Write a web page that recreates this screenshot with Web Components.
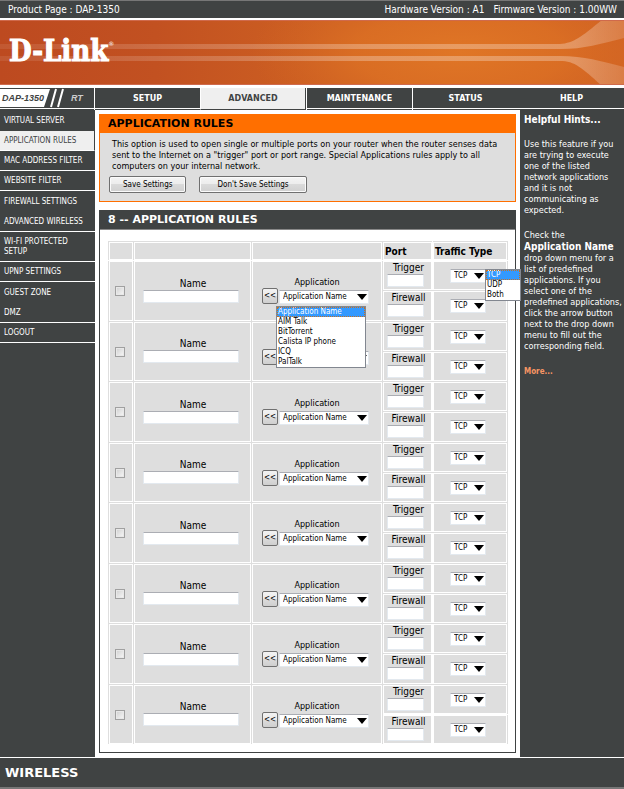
<!DOCTYPE html>
<html lang="en">
<head>
<meta charset="utf-8">
<title>D-Link DAP-1350 : Application Rules</title>
<style>
  body {
    margin: 0;
    background: #fff;
    color: #000;
    font: 9px/11px "DejaVu Sans Condensed", "DejaVu Sans", sans-serif;
    --dark: #404343;
    --orange: #ff6f00;
    --cell: #dedede;
    --wide: "DejaVu Sans", sans-serif;
  }
  .columns {
    display: grid;
    grid-template-columns: 95px minmax(0, 1fr) 104px;
    border-top: 1px solid var(--dark);
  }
  main {
    display: flex;
    flex-direction: column;
    gap: 8px;
    padding: 4px;
  }
</style>
</head>
<body>
<top-bar data-product="DAP-1350" data-hardware="A1" data-firmware="1.00WW"></top-bar>
<brand-banner></brand-banner>
<main-nav></main-nav>
<div class="columns">
  <side-menu></side-menu>
  <main>
    <rule-panel data-title="APPLICATION RULES" class="intro">
      <settings-intro>This option is used to open single or multiple ports on your router when the router senses data sent to the Internet on a "trigger" port or port range. Special Applications rules apply to all computers on your internal network.</settings-intro>
    </rule-panel>
    <rule-panel data-title="8 -- APPLICATION RULES">
      <rules-table data-rows="8"></rules-table>
    </rule-panel>
  </main>
  <helpful-hints></helpful-hints>
</div>
<page-footer></page-footer>

<script>
class TopBar extends HTMLElement {
  constructor() {
    super()
    this.attachShadow({ mode: 'open' })
  }
  connectedCallback() {
    const { product, hardware, firmware } = this.dataset
    this.shadowRoot.innerHTML = `
      <style>
        :host {
          display: flex;
          justify-content: space-between;
          box-sizing: border-box;
          height: 18px;
          padding: 0 7px 0 8px;
          border-top: 1px solid #777;
          background: var(--dark);
          color: #fff;
          font-size: 10px;
          line-height: 17px;
        }
        .versions { display: flex; gap: 9px; }
      </style>
      <span>Product Page : ${product}</span>
      <span class="versions">
        <span>Hardware Version : ${hardware}</span>
        <span>Firmware Version : ${firmware}</span>
      </span>
    `
  }
}

class BrandBanner extends HTMLElement {
  constructor() {
    super()
    this.attachShadow({ mode: 'open' })
    this.shadowRoot.innerHTML = `
      <style>
        :host {
          display: grid;
          align-items: center;
          height: 65px;
          margin: 2px 0 3px;
          overflow: hidden;
        }
        svg, .logo { grid-area: 1 / 1; }
        svg { width: 100%; height: 65px; display: block; }
        .logo {
          padding-left: 9px;
          color: #fff;
          font: bold 29px/32px "DejaVu Serif Condensed", "DejaVu Serif", serif;
          -webkit-text-stroke: 1px #fff;
          z-index: 1;
          margin-bottom: 4px;
        }
        sup {
          font: 6px/6px "DejaVu Sans", sans-serif;
          -webkit-text-stroke: 0;
          vertical-align: 15px;
        }
      </style>
      <svg viewBox="0 0 624 65" preserveAspectRatio="none" aria-hidden="true">
        <defs>
          <linearGradient id="base">
            <stop offset="0" stop-color="#bd4a20"/>
            <stop offset=".25" stop-color="#c25121"/>
            <stop offset=".55" stop-color="#cf6222"/>
            <stop offset="1" stop-color="#d26423"/>
          </linearGradient>
          <radialGradient id="glow" cx="460" cy="32" r="210" gradientUnits="userSpaceOnUse" gradientTransform="translate(0 20) scale(1 .38)">
            <stop offset="0" stop-color="#e07626"/>
            <stop offset=".5" stop-color="#dc7024" stop-opacity=".8"/>
            <stop offset="1" stop-color="#d26423" stop-opacity="0"/>
          </radialGradient>
          <linearGradient id="beam" gradientUnits="userSpaceOnUse" x1="0" x2="624">
            <stop offset="0" stop-color="#fff" stop-opacity=".08"/>
            <stop offset=".3" stop-color="#fff" stop-opacity=".18"/>
            <stop offset=".6" stop-color="#fff" stop-opacity=".28"/>
            <stop offset=".92" stop-color="#fff" stop-opacity=".28"/>
            <stop offset="1" stop-color="#fff" stop-opacity=".16"/>
          </linearGradient>
        </defs>
        <rect width="624" height="65" fill="url(#base)"/>
        <rect width="624" height="65" fill="url(#glow)"/>
        <path d="M0 24H560C574 23 581 17 602 0H624V18C600 24 585 29 560 29H0Z" fill="url(#beam)"/>
        <path d="M0 36H560C585 36 600 41 624 47V65H601C582 48 575 41 560 41H0Z" fill="url(#beam)"/>
        <path d="M0 .5H624M0 64.5H624" stroke="#cf6a4c"/>
      </svg>
      <div class="logo">D-Link<sup>®</sup></div>
    `
  }
}

class MainNav extends HTMLElement {
  constructor() {
    super()
    this.attachShadow({ mode: 'open' })
    const tabs = ['SETUP', 'ADVANCED', 'MAINTENANCE', 'STATUS', 'HELP']
    this.shadowRoot.innerHTML = `
      <style>
        :host { display: block; background: var(--dark); border-bottom: 1px solid #fff; }
        nav {
          display: grid;
          grid-template-columns: 94px repeat(5, minmax(0, 1fr));
          height: 20px;
        }
        .model { display: grid; font: italic bold 9px/21px "Liberation Sans", sans-serif; }
        .model > * { grid-area: 1 / 1; }
        .model svg { width: 94px; height: 20px; }
        .model span { z-index: 1; padding-left: 2px; color: var(--dark); }
        .model .kind { padding-left: 71px; color: #ccc; }
        a {
          box-sizing: border-box;
          border-left: 1px solid #fff;
          color: #fff;
          font: bold 8px/21px var(--wide);
          text-align: center;
          text-decoration: none;
        }
        a.current {
          background: #efefef;
          color: var(--dark);
          border-right: 1px solid var(--dark);
          border-bottom: 1px solid var(--dark);
        }
        a:last-child { border-left-color: transparent; }
      </style>
      <nav>
        <div class="model">
          <svg viewBox="0 0 94 20" aria-hidden="true">
            <path d="M0 1H50L44 19H0Z" fill="#fff"/>
            <path d="M56 1L51 19M63 1L58 19" stroke="#fff" stroke-width="2"/>
          </svg>
          <span>DAP-1350</span>
          <span class="kind">RT</span>
        </div>
        ${tabs.map(t => `<a href="#"${t === 'ADVANCED' ? ' class="current"' : ''}>${t}</a>`).join('')}
      </nav>
    `
  }
}

class SideMenu extends HTMLElement {
  constructor() {
    super()
    this.attachShadow({ mode: 'open' })
    // second value: state of the item
    const items = [
      ['VIRTUAL SERVER', 'open'],
      ['APPLICATION RULES', 'current'],
      ['MAC ADDRESS FILTER', ''],
      ['WEBSITE FILTER', ''],
      ['FIREWALL SETTINGS', 'open'],
      ['ADVANCED WIRELESS', ''],
      ['WI-FI PROTECTED SETUP', ''],
      ['UPNP SETTINGS', ''],
      ['GUEST ZONE', 'open'],
      ['DMZ', ''],
      ['LOGOUT', '']
    ]
    this.shadowRoot.innerHTML = `
      <style>
        :host { display: block; background: var(--dark); }
        ul { margin: 0; padding: 0; list-style: none; }
        a {
          display: block;
          padding: 5px 14px 4px 4px;
          border-bottom: 1px solid #fff;
          color: #fff;
          font-size: 8px;
          line-height: 10px;
          text-decoration: none;
        }
        a:not(.wrap) { padding-right: 0; white-space: nowrap; }
        a.open { padding: 6px 0 5px 4px; border-bottom: 0; }
        a.current { background: #efefef; color: var(--dark); border-right: 1px solid var(--dark); }
      </style>
      <ul>
        ${items.map(([text, state]) => `<li><a href="#" class="${state} ${text.length > 18 ? 'wrap' : ''}">${text}</a></li>`).join('')}
      </ul>
    `
  }
}

class RulePanel extends HTMLElement {
  constructor() {
    super()
    this.attachShadow({ mode: 'open' })
  }
  connectedCallback() {
    this.shadowRoot.innerHTML = `
      <style>
        :host { display: block; border: 1px solid var(--dark); }
        :host(.intro) { border-color: var(--orange); background: var(--cell); }
        h2 {
          margin: 0;
          padding-left: 8px;
          background: var(--dark);
          color: #fff;
          border-bottom: 1px solid #888;
          font: bold 11px/18px var(--wide);
        }
        :host(.intro) h2 { background: var(--orange); color: #000; border: 0; }
      </style>
      <h2>${this.dataset.title}</h2>
      <slot></slot>
    `
  }
}

class SettingsIntro extends HTMLElement {
  constructor() {
    super()
    this.attachShadow({ mode: 'open' })
    this.shadowRoot.innerHTML = `
      <style>
        :host { display: block; padding: 6px 9px 8px; }
        p { margin: 0; padding: 0 3px; }
        div { display: flex; gap: 13px; margin-top: 4px; }
        button {
          height: 17px;
          padding: 0 13px;
          border: 1px solid #707070;
          border-radius: 2px;
          background: linear-gradient(#f4f4f4, #ececec 50%, #dadada 50%, #d0d0d0);
          box-shadow: inset 0 0 0 1px #fbfbfb;
          color: #000;
          font: 8px/13px "DejaVu Sans Condensed", sans-serif;
        }
        button + button { padding: 0 17px; }
      </style>
      <p><slot></slot></p>
      <div>
        <button type="button">Save Settings</button>
        <button type="button">Don't Save Settings</button>
      </div>
    `
  }
}

class RulesTable extends HTMLElement {
  constructor() {
    super()
    this.attachShadow({ mode: 'open' })
  }
  select(cls, label, options) {
    return `
      <span class="select ${cls}">
        <select aria-label="${label}">${options.map(o => `<option>${o}</option>`).join('')}</select>
        <svg viewBox="0 0 10 6" width="10" height="6" aria-hidden="true"><path d="M0 0H10L5 6Z"/></svg>
      </span>`
  }
  menu(options) {
    return `<ul role="listbox">${options.map((o, i) => `<li role="option" aria-selected="${i === 0}">${o}</li>`).join('')}</ul>`
  }
  row(n) {
    const apps = ['Application Name', 'AIM Talk', 'BitTorrent', 'Calista IP phone', 'ICQ', 'PalTalk']
    const types = ['TCP', 'UDP', 'Both']
    return `
      <tbody>
        <tr>
          <td rowspan="2" class="check"><input type="checkbox" aria-label="Enable rule ${n}"></td>
          <td rowspan="2" class="name">
            <label for="name${n}">Name</label>
            <input type="text" id="name${n}">
          </td>
          <td rowspan="2" class="app">
            <span class="title">Application</span>
            <div class="pick">
              <button type="button">&lt;&lt;</button>
              ${this.select('wide', 'Application ' + n, apps)}
              ${n === 1 ? this.menu(apps) : ''}
            </div>
          </td>
          <td class="port">
            <label for="trigger${n}">Trigger</label>
            <input type="text" id="trigger${n}">
          </td>
          <td class="traffic">
            <div>${this.select('', 'Trigger type ' + n, types)}${n === 1 ? this.menu(types) : ''}</div>
          </td>
        </tr>
        <tr>
          <td class="port">
            <label for="firewall${n}">Firewall</label>
            <input type="text" id="firewall${n}">
          </td>
          <td class="traffic"><div>${this.select('', 'Firewall type ' + n, types)}</div></td>
        </tr>
      </tbody>`
  }
  connectedCallback() {
    const count = Number(this.dataset.rows)
    const rows = Array.from({ length: count }, (_, i) => this.row(i + 1))
    this.shadowRoot.innerHTML = `
      <style>
        :host { display: block; padding: 11px 7px 7px 8px; }
        table { width: 100%; border-collapse: collapse; table-layout: fixed; }
        th, td {
          box-sizing: border-box;
          padding: 0;
          border: 1px solid var(--cell);
          background: var(--cell);
          box-shadow: inset 0 0 0 1px #fff;
        }
        th { height: 19px; padding-left: 2px; border-bottom-color: #fff; font: bold 10px/17px "DejaVu Sans Condensed", sans-serif; text-align: left; white-space: nowrap; }
        tbody tr { height: 30px; }
        tbody:nth-of-type(odd) tr:last-child { height: 31px; }
        tbody:last-of-type td { border-bottom-color: #fff; }
        th:nth-child(4), .port { border-right-color: #fff; }
        td { text-align: center; vertical-align: middle; }
        label, .title { display: block; font-size: 10px; line-height: 12px; }
        .title { font-size: 9px; }
        input[type=text] {
          display: block;
          box-sizing: border-box;
          width: 96px;
          height: 13px;
          margin: 0;
          padding: 0 2px;
          border: 1px solid #e3e9ef;
          border-top-color: #abadb3;
          background: #fff;
          font: 8px/11px "DejaVu Sans Condensed", sans-serif;
        }
        .name { padding: 0 0 2px 9px; }
        .name label { padding-right: 8px; }
        input[type=checkbox] {
          appearance: none;
          display: block;
          box-sizing: border-box;
          width: 10px;
          height: 10px;
          margin: 0 auto;
          border: 1px solid #a0a0a0;
          background: linear-gradient(135deg, #cfcfcf, #f8f8f8);
          box-shadow: inset 0 0 0 1px #e8e8e8;
        }
        .check { padding-right: 2px; }
        .port input[type=text] { width: 37px; margin-left: 4px; }
        .port label { padding: 1px 0 0 2px; }
        .port { vertical-align: top; }
        .app { padding-bottom: 2px; }
        .pick { position: relative; display: flex; align-items: end; gap: 1px; padding-left: 10px; }
        button {
          width: 16px;
          height: 16px;
          padding: 0;
          border: 1px solid #707070;
          border-radius: 2px;
          background: linear-gradient(#f2f2f2, #ebebeb 50%, #dcdcdc 50%, #cfcfcf);
          color: #000;
          font: 8px/12px "DejaVu Sans Condensed", sans-serif;
        }
        .select { display: grid; align-items: center; width: 36px; }
        .select > * { grid-area: 1 / 1; }
        .select.wide { width: 90px; }
        .select svg { z-index: 1; justify-self: end; margin-right: 2px; pointer-events: none; }
        select {
          appearance: none;
          box-sizing: border-box;
          width: 100%;
          height: 14px;
          margin: 0;
          padding: 0 0 0 3px;
          border: 1px solid #e3e9ef;
          border-top-color: #abadb3;
          border-radius: 0;
          background: #fff;
          color: #000;
          font: 8px/12px "DejaVu Sans Condensed", sans-serif;
        }
        .traffic { padding: 0 4px 0 0; }
        .traffic div { position: relative; width: 36px; margin: 0 auto; }
        ul {
          position: absolute;
          top: 18px;
          left: 24px;
          z-index: 2;
          box-sizing: border-box;
          width: 90px;
          margin: 0;
          padding: 0;
          border: 1px solid #828790;
          background: #fff;
          list-style: none;
          font-size: 8px;
          line-height: 10px;
          text-align: left;
          white-space: nowrap;
        }
        .traffic ul { top: 0; left: 35px; width: 36px; }
        li { padding-left: 1px; }
        li[aria-selected=true] { background: #3399ff; color: #fff; outline: 1px dotted #c87020; outline-offset: -1px; }
      </style>
      <table>
        <colgroup><col style="width:25px"><col style="width:118px"><col><col style="width:50px"><col style="width:75px"></colgroup>
        <thead><tr><th></th><th></th><th></th><th>Port</th><th>Traffic Type</th></tr></thead>
        ${rows.join('')}
      </table>
    `
  }
}

class HelpfulHints extends HTMLElement {
  constructor() {
    super()
    this.attachShadow({ mode: 'open' })
    this.shadowRoot.innerHTML = `
      <style>
        :host { display: block; padding: 4px 0 0 4px; background: var(--dark); color: #fff; }
        h3 { margin: 0 0 14px; font: bold 10px/11px "DejaVu Sans Condensed", sans-serif; }
        p { margin: 0 0 14px; }
        b { font-size: 10px; }
        a { color: #f79563; font-size: 8px; font-weight: bold; text-decoration: none; }
      </style>
      <h3>Helpful Hints...</h3>
      <p>Use this feature if you are trying to execute one of the listed network applications and it is not communicating as expected.</p>
      <p>Check the <b>Application Name</b> drop down menu for a list of predefined applications. If you select one of the predefined applications, click the arrow button next to the drop down menu to fill out the corresponding field.</p>
      <p><a href="#">More...</a></p>
    `
  }
}

class PageFooter extends HTMLElement {
  constructor() {
    super()
    this.attachShadow({ mode: 'open' })
    this.shadowRoot.innerHTML = `
      <style>
        :host {
          display: block;
          padding-left: 5px;
          border-top: 1px solid #fff;
          border-bottom: 2px solid #777;
          background: var(--dark);
          color: #fff;
          font: bold 13px/29px var(--wide);
        }
      </style>
      WIRELESS
    `
  }
}

customElements.define('top-bar', TopBar)
customElements.define('brand-banner', BrandBanner)
customElements.define('main-nav', MainNav)
customElements.define('side-menu', SideMenu)
customElements.define('rule-panel', RulePanel)
customElements.define('settings-intro', SettingsIntro)
customElements.define('rules-table', RulesTable)
customElements.define('helpful-hints', HelpfulHints)
customElements.define('page-footer', PageFooter)
</script>
</body>
</html>
